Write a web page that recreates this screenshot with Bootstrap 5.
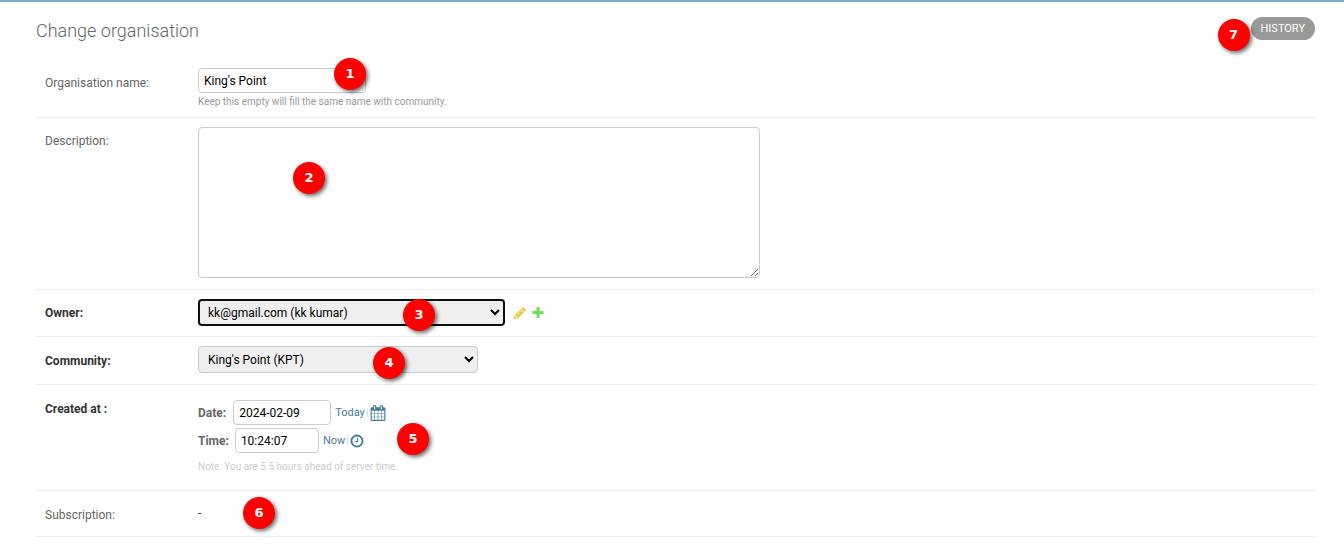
<!DOCTYPE html>
<html lang="en">
<head>
<meta charset="utf-8">
<meta name="viewport" content="width=device-width, initial-scale=1">
<title>Change organisation</title>
<link href="https://cdn.jsdelivr.net/npm/bootstrap@5.3.0/dist/css/bootstrap.min.css" rel="stylesheet">
<style>
  body { font-family: Roboto, "Liberation Sans", sans-serif; font-size: 12px; line-height: 16px; color: #333; background: #fff; }
  .page { border-top: 2px solid #79aacb; padding: 15px 29px 16px 36px; }
  .page-head { margin-bottom: 14px; }
  h1 { font-size: 18px; line-height: 28px; font-weight: 300; color: #666; margin: 0; }
  .history { position: relative; }
  .history button { display: block; height: 23px; padding: 0 10px; border: 0; border-radius: 15px; background: #999; color: #fff; font-size: 11px; line-height: 22px; font-weight: 400; text-transform: uppercase; }
  .form-line { display: flex; padding: 9px; border-bottom: 1px solid #eee; }
  .form-line > .name { flex: 0 0 153px; padding-top: 7px; color: #666; }
  .form-line > .required { font-weight: 700; color: #333; }
  .text-line { padding-bottom: 11px; }
  .text-line > .name { padding-top: 6px; }
  .owner-line { padding-bottom: 10px; }
  .owner-line > .name { padding-top: 6px; }
  .community-line { padding-bottom: 11px; }
  .field { position: relative; flex: 1 1 0; min-width: 0; }
  .field input, .field textarea, .field select { border: 1px solid #ccc; border-radius: 4px; color: #000; font-size: 12px; outline: 0; }
  .field input { height: 25px; padding: 0 5px; background: #fff; }
  .field textarea { display: block; width: 562px; max-width: 100%; height: 151px; padding: 5px; }
  .field select { height: 27px; padding: 0 5px; background: #efefef; }
  .field select.active { border: 2px solid #101010; padding: 0 4px; }
  .field .w-name { width: 168px; }
  .field .w-date { width: 98px; margin-left: 7px; }
  .field .w-time { width: 84px; margin-left: 6px; }
  .field .w-owner { width: 307px; }
  .field .w-community { width: 280px; }
  .hint { font-size: 10px; line-height: 13px; padding-top: 2px; color: #999; }
  .note { font-size: 10px; line-height: 13px; margin-top: 7px; color: #ccc; }
  .when { font-weight: 700; color: #666; }
  .stamp { padding: 6px 0 8px; }
  .stamp-rows { display: grid; gap: 3px; }
  .shortcut { font-size: 11px; color: #447e9b; text-decoration: none; }
  .divider { width: 1px; height: 8px; background: #ddd; margin: 0 2px 0 2px; }
  .subscription { height: 27px; padding-top: 5px; }
  .marker { position: absolute; width: 32px; height: 32px; border-radius: 50%; background: #f00; color: #fff; font: 700 13px/32px "DejaVu Sans", sans-serif; text-align: center; box-shadow: 2px 2px 4px rgba(0,0,0,.6); }
  svg { display: block; }
</style>
</head>
<body>
<main class="page">
  <header class="page-head d-flex justify-content-between align-items-start">
    <h1>Change organisation</h1>
    <div class="history"><button type="button">History</button><span class="marker" style="left:-33px;top:2px">7</span></div>
  </header>
  <form>
    <div class="form-line">
      <label class="name" for="org">Organisation name:</label>
      <div class="field">
        <input id="org" class="d-block w-name" value="King's Point">
        <div class="hint">Keep this empty will fill the same name with community.</div>
        <span class="marker" style="left:136px;top:-10px">1</span>
      </div>
    </div>
    <div class="form-line text-line">
      <label class="name" for="desc">Description:</label>
      <div class="field">
        <textarea id="desc"></textarea>
        <span class="marker" style="left:95px;top:35px">2</span>
      </div>
    </div>
    <div class="form-line owner-line">
      <label class="name required" for="owner">Owner:</label>
      <div class="field d-flex align-items-center">
        <select id="owner" class="active w-owner"><option>kk@gmail.com (kk kumar)</option></select>
        <a href="#" aria-label="Change owner" class="ms-2"><svg width="14" height="14" viewBox="0 0 1792 1792"><path fill="#efca45" d="M491 1536l91-91-235-235-91 91v107h128v128h107zm523-928q0-22-22-22-10 0-17 7l-542 542q-7 7-7 17 0 22 22 22 10 0 17-7l542-542q7-7 7-17zm-54-192l416 416-832 832h-416v-416zm683 96q0 53-37 90l-166 166-416-416 166-165q36-38 90-38 53 0 91 38l235 234q37 39 37 91z"/></svg></a>
        <a href="#" aria-label="Add owner" class="ms-1"><svg width="14" height="14" viewBox="0 0 1792 1792"><path fill="#70db55" d="M1600 736v192q0 40-28 68t-68 28h-416v416q0 40-28 68t-68 28h-192q-40 0-68-28t-28-68v-416h-416q-40 0-68-28t-28-68v-192q0-40 28-68t68-28h416v-416q0-40 28-68t68-28h192q40 0 68 28t28 68v416h416q40 0 68 28t28 68z"/></svg></a>
        <span class="marker" style="left:205px;top:0">3</span>
      </div>
    </div>
    <div class="form-line community-line">
      <label class="name required" for="community">Community:</label>
      <div class="field">
        <select id="community" class="d-block w-community"><option>King's Point (KPT)</option></select>
        <span class="marker" style="left:175px;top:1px">4</span>
      </div>
    </div>
    <div class="form-line">
      <div class="name required">Created at :</div>
      <div class="field stamp">
        <div class="stamp-rows">
          <div class="d-flex align-items-center">
            <label class="when" for="date">Date:</label><input id="date" class="w-date" value="2024-02-09">
            <a href="#" class="shortcut ms-1">Today</a><span class="divider"></span>
            <a href="#" aria-label="Choose date"><svg width="16" height="16" viewBox="0 0 1792 1792"><path fill="#447e9b" d="M192 1664h288v-288h-288v288zm352 0h320v-288h-320v288zm-352-352h288v-320h-288v320zm352 0h320v-320h-320v320zm-352-384h288v-288h-288v288zm736 736h320v-288h-320v288zm-384-736h320v-288h-320v288zm768 736h288v-288h-288v288zm-384-352h320v-320h-320v320zm-352-864v-288q0-13-9-22t-23-10h-64q-13 0-22 10t-10 22v288q0 13 10 22t22 10h64q13 0 23-10t9-22zm736 864h288v-320h-288v320zm-384-384h320v-288h-320v288zm384 0h288v-288h-288v288zm32-480v-288q0-13-9-22t-23-10h-64q-13 0-22 10t-10 22v288q0 13 10 22t22 10h64q13 0 23-10t9-22zm384-64v1280q0 52-38 90t-90 38h-1408q-52 0-90-38t-38-90v-1280q0-52 38-90t90-38h128v-96q0-66 47-113t113-47h64q66 0 113 47t47 113v96h384v-96q0-66 47-113t113-47h64q66 0 113 47t47 113v96h128q52 0 90 38t38 90z"/></svg></a>
          </div>
          <div class="d-flex align-items-center">
            <label class="when" for="time">Time:</label><input id="time" class="w-time" value="10:24:07">
            <a href="#" class="shortcut ms-1">Now</a><span class="divider"></span>
            <a href="#" aria-label="Choose time"><svg width="14" height="14" viewBox="64 64 1664 1664"><path fill="#447e9b" d="M1024 544v448q0 14-9 23t-23 9h-320q-14 0-23-9t-9-23v-64q0-14 9-23t23-9h224v-352q0-14 9-23t23-9h64q14 0 23 9t9 23zm416 352q0-148-73-273t-198-198-273-73-273 73-198 198-73 273 73 273 198 198 273 73 273-73 198-198 73-273zm224 0q0 209-103 386t-279 279-386 103-386-103-279-279-103-386 103-386 279-279 386-103 386 103 279 279 103 386z"/></svg></a>
          </div>
        </div>
        <div class="note">Note: You are 5.5 hours ahead of server time.</div>
        <span class="marker" style="left:199px;top:29px">5</span>
      </div>
    </div>
    <div class="form-line">
      <div class="name">Subscription:</div>
      <div class="field subscription">-<span class="marker" style="left:45px;top:-3px">6</span></div>
    </div>
  </form>
</main>
<script src="https://cdn.jsdelivr.net/npm/bootstrap@5.3.0/dist/js/bootstrap.bundle.min.js"></script>
</body>
</html>
